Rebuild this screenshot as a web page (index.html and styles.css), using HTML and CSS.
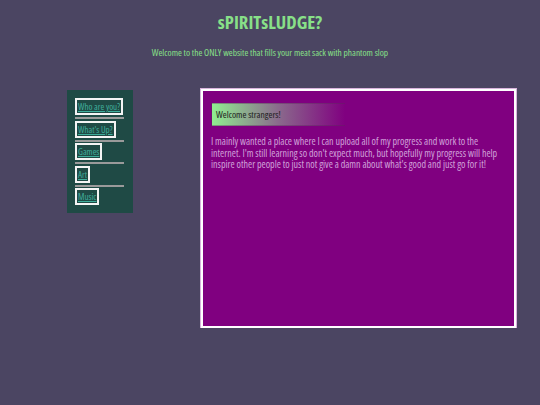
FILE: index.html
```html
<!DOCTYPE html>
<html lang="en">
  <head>
    <meta charset="UTF-8" />
    <meta name="viewport" content="width=device-width, initial-scale=1.0" />
    <title>sPIRITsLUDGE?</title>
    <link rel="stylesheet" href="styles.css">
  </head>
  <body>
    <!-- Site header -->
    <header class="site-header">
      <h1 class="site-title">sPIRITsLUDGE?</h1>
      <p class="tagline">Welcome to the ONLY website that fills your meat sack with phantom slop</p>
    </header>

    <div class="layout">
      <!-- Side navigation -->
      <nav class="sidebar" aria-label="Main Navigation">
        <a class="nav-link" href="#">Who are you?</a>
        <hr>
        <a class="nav-link" href="#">What's Up?</a>
        <hr>
        <a class="nav-link" href="#">Games</a>
        <hr>
        <a class="nav-link" href="#">Art</a>
        <hr>
        <a class="nav-link" href="#">Music</a>
      </nav>

      <!-- Main content -->
      <main class="content">
        <h2 class="welcome">Welcome strangers!</h2>
        <p>
          I mainly wanted a place where I can upload all of my progress and work to the internet. I'm still learning so don't expect much, but hopefully my progress will help inspire other people to just not give a damn about what's good and just go for it!
        </p>
      </main>
    </div>
  </body>
</html>
```
FILE: styles.css
```css
/* Colours */
:root {
  --page-bg: #4b4562;
  --slime: #88e088;
  --panel-bg: #1f4a45;
  --link: #3fae9c;
  --purple: #800080;
  --lilac: #d0a2da;
}
* {
  box-sizing: border-box;
}
body {
  margin: 0;
  background: var(--page-bg);
  font-family: "Open Sans", "DejaVu Sans Condensed", sans-serif;
  font-stretch: condensed;
  font-size: 9px;
  color: var(--slime);
}
/* Header */
.site-header {
  text-align: center;
  padding-top: 11px;
}
.site-title {
  margin: 0;
  font-size: 18.6px;
  line-height: 22px;
  font-weight: bold;
  color: var(--slime);
}
.tagline {
  margin: 14px 0 0;
  font-size: 9.4px;
  line-height: 12px;
}
/* Two column layout */
.layout {
  display: flex;
  align-items: flex-start;
  gap: 68px;
  padding-left: 67px;
  margin-top: 30px;
}
/* Sidebar */
.sidebar {
  width: 66px;
  margin-top: 1px;
  padding: 8px 9px 8px 8px;
  background: var(--panel-bg);
  display: flex;
  flex-direction: column;
  align-items: flex-start;
}
.nav-link {
  color: var(--link);
  text-decoration: underline;
  white-space: nowrap;
  border: 2px solid #f4f4f4;
  padding: 1px 1px;
  line-height: 11px;
}
.sidebar hr {
  align-self: stretch;
  margin: 2px 0 1.5px;
  border: none;
  height: 2px;
  background: #9a9a9a;
}
/* Content box */
.content {
  width: 315px;
  height: 239px;
  background: var(--purple);
  border: 2px solid #fff;
  box-shadow: 0 0 0 1px #d8b4dc;
  padding: 12px 8px;
}
.welcome {
  margin: 0;
  width: 134px;
  height: 23px;
  padding-left: 4px;
  display: flex;
  align-items: center;
  font-size: 9.5px;
  font-weight: normal;
  color: #1c1c1c;
  background: linear-gradient(to right, #90ee90 0%, #8a6a8c 50%, var(--purple) 100%);
  border: 1px solid rgba(90, 40, 90, 0.4);
  border-right: none;
}
.content p {
  width: 296px;
  margin: 10px 0 0;
  font-size: 10px;
  color: var(--lilac);
  line-height: 11.5px;
}
```
